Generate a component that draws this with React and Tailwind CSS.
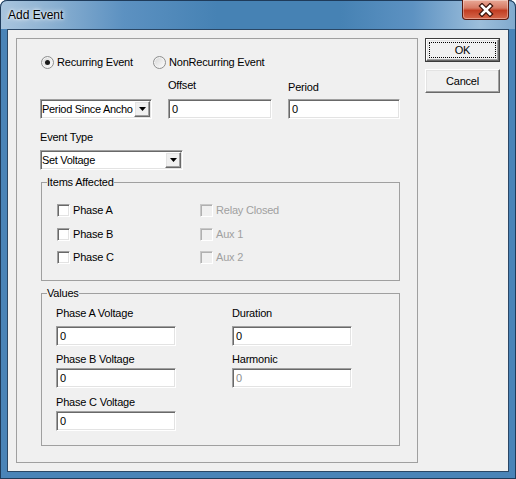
import React from "react";

const sunken =
  "border border-t-[#a0a0a0] border-l-[#a0a0a0] border-r-white border-b-white shadow-[inset_1px_1px_0_#696969,inset_-1px_-1px_0_#e3e3e3]";
const raised =
  "border border-t-white border-l-white border-r-[#696969] border-b-[#696969] shadow-[inset_-1px_-1px_0_#a0a0a0,inset_1px_1px_0_#e3e3e3]";

const TextBox = ({ className = "", value = "0", disabled = false }) => (
  <div className={`h-[20px] bg-white flex items-center pl-[3px] leading-[13px] ${sunken} ${disabled ? "text-[#8c8c8c]" : ""} ${className}`}>
    {value}
  </div>
);

const Combo = ({ className = "", value }) => (
  <div className={`h-[20px] bg-white flex ${sunken} ${className}`}>
    <div className="flex-1 overflow-hidden whitespace-nowrap pl-[1px] leading-[18px] tracking-[-0.3px]">{value}</div>
    <div className={`w-[16px] m-[1px] shrink-0 bg-[#f0f0f0] flex items-center justify-center ${raised}`}>
      <svg width="7" height="4" viewBox="0 0 7 4">
        <path d="M0 0H7L3.5 4Z" fill="#000" />
      </svg>
    </div>
  </div>
);

const Radio = ({ label, checked = false, className = "" }) => (
  <div className={`flex items-center ${className}`}>
    <div className="w-[13px] h-[13px] rounded-full border border-[#8e8f8f] bg-[linear-gradient(135deg,#d5d5d5,#ffffff)] shadow-[inset_0_0_0_1px_#f4f4f4] flex items-center justify-center">
      {checked && <div className="w-[5px] h-[5px] rounded-full bg-[#1a1a1a]" />}
    </div>
    <span className="ml-[3px] leading-[13px]">{label}</span>
  </div>
);

const Check = ({ label, disabled = false }) => (
  <div className="flex items-center h-[13px]">
    <div
      className={`w-[13px] h-[13px] border ${
        disabled
          ? "bg-[#f0f0f0] border-t-[#c8c8c8] border-l-[#c8c8c8] border-r-white border-b-white shadow-[inset_1px_1px_0_#b0b0b0]"
          : `bg-white ${sunken}`
      }`}
    />
    <span className={`ml-[3px] leading-[13px] ${disabled ? "text-[#a0a0a0]" : ""}`}>{label}</span>
  </div>
);

export default function App() {
  return (
    <div className="w-[516px] h-[479px] flex flex-col rounded-t-[7px] bg-[#4a84b8] shadow-[inset_0_0_0_1px_#1f3b5a] overflow-hidden font-['Liberation_Sans',Arial,sans-serif] text-[11px] tracking-[-0.2px] text-black">
      {/* title bar */}
      <div className="h-[29px] shrink-0 flex justify-between rounded-t-[7px] bg-[linear-gradient(90deg,#a9c5de_0%,#8fb3d3_9%,#5c91c1_24%,#4682b4_42%,#4682b4_66%,#5d92c2_80%,#9cbedb_93%,#80a9cd_100%)] shadow-[inset_0_1px_0_#1f3b5a,inset_1px_0_0_#1f3b5a,inset_-1px_0_0_#1f3b5a]">
        <span className="ml-[8px] mt-[8px] leading-[14px] text-[12px] tracking-normal [text-shadow:0_0_6px_#ffffff,0_0_3px_#ffffff]">
          Add Event
        </span>
        <div className="mr-[7px] w-[47px] h-[20px] rounded-b-[4px] border border-t-0 border-[#5a1a10] bg-[linear-gradient(180deg,#e9a997_0%,#d67a64_42%,#c23e23_55%,#d5684c_100%)] shadow-[inset_0_0_0_1px_rgba(255,255,255,0.35)] flex items-center justify-center">
          <svg width="16" height="14" viewBox="0 0 16 14">
            <path d="M4 3L12 11M12 3L4 11" stroke="#3b1209" strokeWidth="5" strokeLinecap="square" />
            <path d="M4 3L12 11M12 3L4 11" stroke="#ffffff" strokeWidth="2.6" strokeLinecap="square" />
          </svg>
        </div>
      </div>

      {/* client area */}
      <div className="mx-[7px] h-[443px] border border-[#2a4766] bg-[#f0f0f0] p-2 flex">
        <div className="w-[402px] h-[425px] shrink-0 border border-[#a0a0a0] flex flex-col">
          <div className="mt-[17px] ml-[24px] h-[13px] flex items-center">
            <Radio checked label="Recurring Event" className="w-[112px]" />
            <Radio label="NonRecurring Event" />
          </div>

          <div className="mt-[10px] flex items-end">
            <Combo className="ml-[23px] w-[112px]" value="Period Since Ancho" />
            <div className="ml-[16px] w-[104px]">
              <div className="leading-[13px]">Offset</div>
              <TextBox className="mt-[7px]" />
            </div>
            <div className="ml-[16px] w-[112px]">
              <div className="leading-[13px]">Period</div>
              <TextBox className="mt-[5px]" />
            </div>
          </div>

          <div className="mt-[12px] ml-[23px] leading-[13px]">Event Type</div>
          <Combo className="mt-[6px] ml-[23px] w-[143px]" value="Set Voltage" />

          <fieldset className="mt-[6px] ml-[24px] w-[359px] h-[105px] border border-[#a0a0a0]">
            <legend className="ml-[5px] leading-[13px]">Items Affected</legend>
            <div className="mt-[15px] ml-[15px] grid grid-cols-[143px_auto] gap-y-[10.5px]">
              <Check label="Phase A" />
              <Check label="Relay Closed" disabled />
              <Check label="Phase B" />
              <Check label="Aux 1" disabled />
              <Check label="Phase C" />
              <Check label="Aux 2" disabled />
            </div>
          </fieldset>

          <fieldset className="mt-[6px] ml-[24px] w-[359px] h-[159px] border border-[#a0a0a0]">
            <legend className="ml-[5px] leading-[13px]">Values</legend>
            <div className="ml-[14px] flex">
              <div className="w-[120px] flex flex-col">
                <div className="mt-[7px] leading-[13px]">Phase A Voltage</div>
                <TextBox className="mt-[6px]" />
                <div className="mt-[7px] leading-[13px]">Phase B Voltage</div>
                <TextBox className="mt-[2px]" />
                <div className="mt-[8px] leading-[13px]">Phase C Voltage</div>
                <TextBox className="mt-[2px]" />
              </div>
              <div className="ml-[56px] w-[120px] flex flex-col">
                <div className="mt-[7px] leading-[13px]">Duration</div>
                <TextBox className="mt-[6px]" />
                <div className="mt-[7px] leading-[13px]">Harmonic</div>
                <TextBox className="mt-[2px]" disabled />
              </div>
            </div>
          </fieldset>
        </div>

        <div className="ml-[7px] flex flex-col gap-[7px]">
          <div className="w-[75px] h-[24px] border border-[#3c3c3c] bg-[#f0f0f0]">
            <div className={`h-full ${raised} p-[2px]`}>
              <div className="h-full border border-dotted border-black flex items-center justify-center leading-[13px]">OK</div>
            </div>
          </div>
          <div className={`w-[75px] h-[24px] bg-[#f0f0f0] flex items-center justify-center leading-[13px] ${raised}`}>
            Cancel
          </div>
        </div>
      </div>
    </div>
  );
}
